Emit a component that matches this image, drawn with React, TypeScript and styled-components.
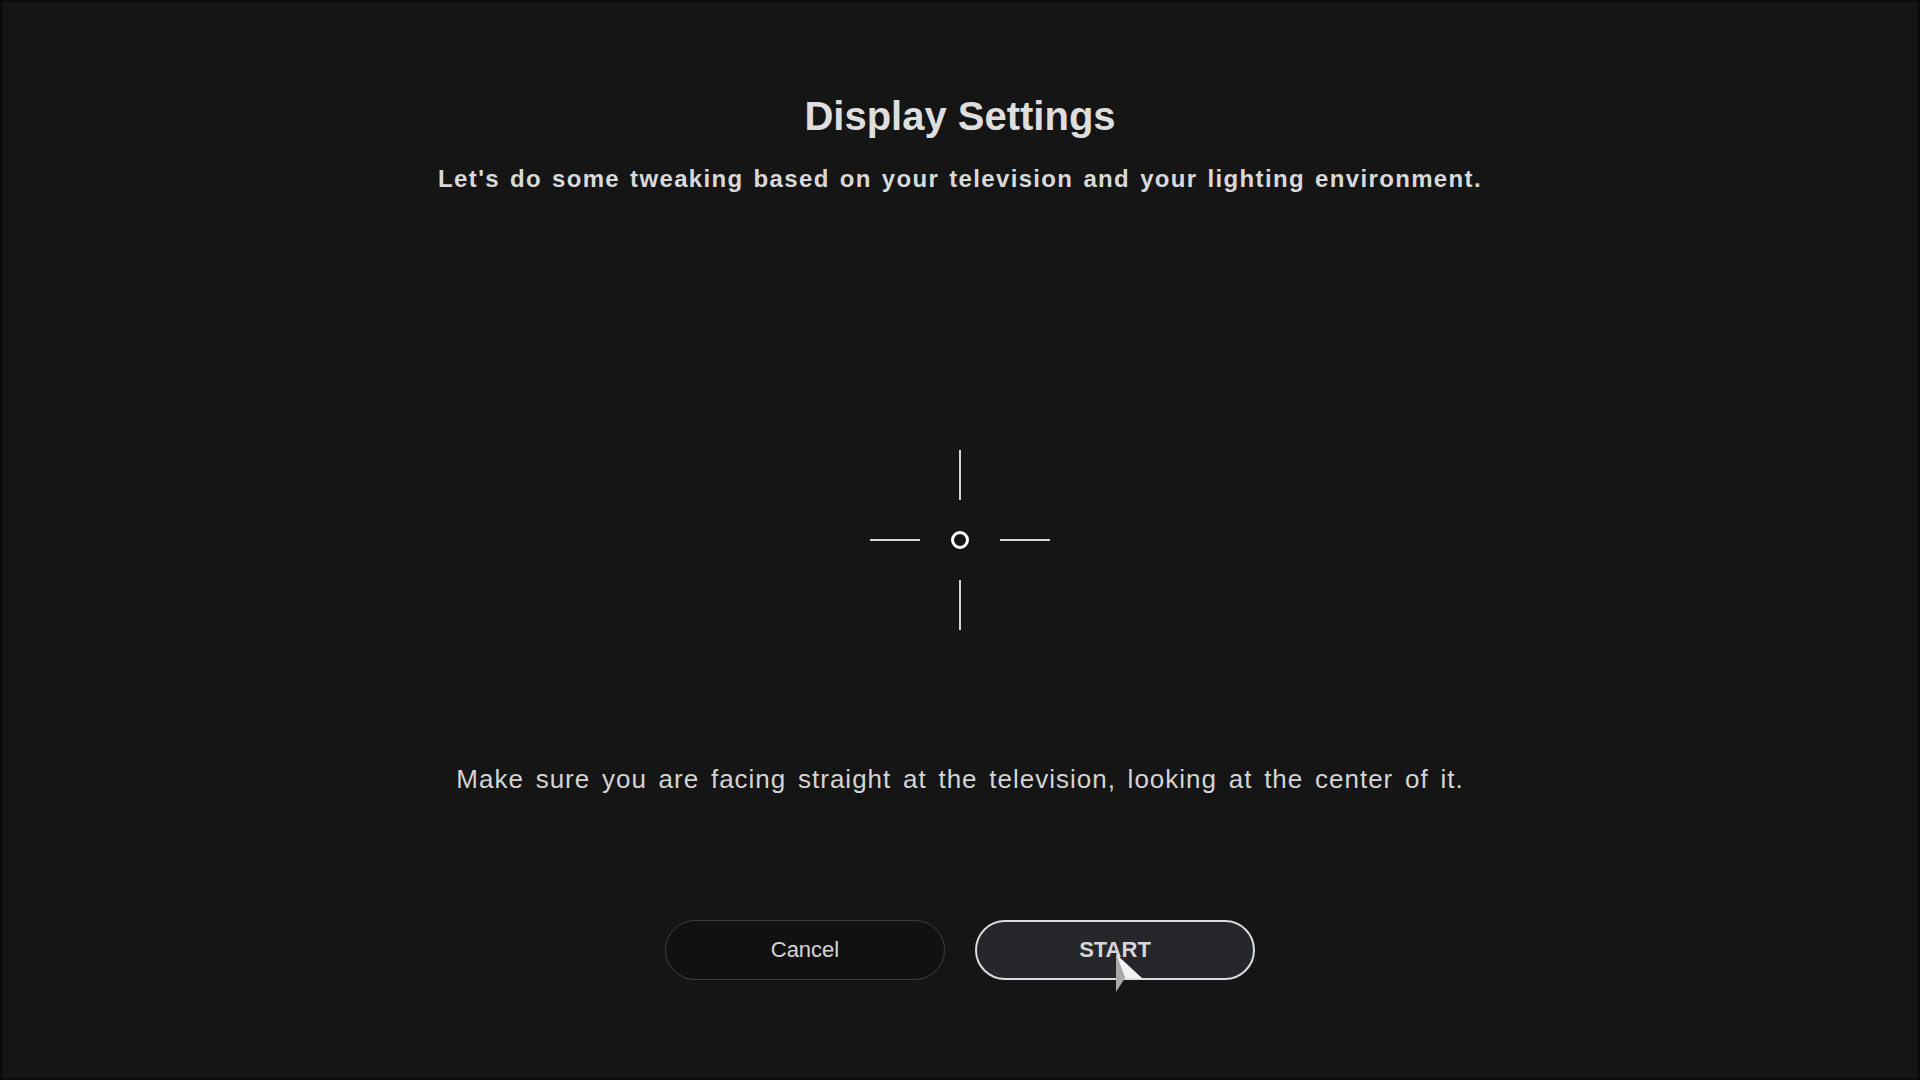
import React from 'react'
import styled, { createGlobalStyle } from 'styled-components'

const GlobalStyle = createGlobalStyle`
  html, body {
    margin: 0;
    padding: 0;
    background: #151515;
  }
  * {
    box-sizing: border-box;
  }
`

const Screen = styled.div`
  width: 100%;
  height: 100vh;
  background: #151515;
  box-shadow: inset 0 0 0 2px #0b0b0b;
  display: flex;
  flex-direction: column;
  align-items: center;
  font-family: 'Liberation Sans', Arial, sans-serif;
  color: #dcdcdc;
  overflow: hidden;
`

const Title = styled.h1`
  margin: 92px 0 0;
  font-size: 40px;
  line-height: 48px;
  font-weight: 700;
  color: #dedede;
`

const Subtitle = styled.p`
  margin: 23px 0 0;
  font-size: 24px;
  line-height: 32px;
  font-weight: 700;
  letter-spacing: 1.35px;
  word-spacing: 2px;
  color: #d9d9d9;
`

const Target = styled.svg`
  margin-top: 255px;
  width: 180px;
  height: 180px;
  display: block;
`

const Hint = styled.p`
  margin: 133px 0 0;
  font-size: 26px;
  line-height: 32px;
  letter-spacing: 1px;
  word-spacing: 3.5px;
  color: #d4d4d4;
`

const ButtonRow = styled.div`
  margin-top: 125px;
  display: flex;
  gap: 30px;
`

const Button = styled.button<{ $primary?: boolean }>`
  position: relative;
  width: 280px;
  height: 60px;
  border-radius: 30px;
  font-family: inherit;
  font-size: 22px;
  font-weight: ${(p) => (p.$primary ? 700 : 400)};
  color: #d6d6d6;
  background: ${(p) => (p.$primary ? '#26272a' : '#111111')};
  border: ${(p) => (p.$primary ? '2px solid #dcdcdc' : '1px solid #3f3f3f')};
  cursor: default;
`

const Pointer = styled.svg`
  position: absolute;
  left: 138px;
  top: 31px;
  width: 30px;
  height: 40px;
  pointer-events: none;
`

const Crosshair = () => (
  <Target viewBox="0 0 180 180">
    <g stroke="#d6d6d6" strokeWidth="2">
      <line x1="90" y1="0" x2="90" y2="50" />
      <line x1="90" y1="130" x2="90" y2="180" />
      <line x1="0" y1="90" x2="50" y2="90" />
      <line x1="130" y1="90" x2="180" y2="90" />
    </g>
    <circle cx="90" cy="90" r="7.5" fill="none" stroke="#ffffff" strokeWidth="3" />
  </Target>
)

const Arrow = () => (
  <Pointer viewBox="0 0 30 40">
    <polygon points="1,1 1,39 10,25" fill="#a9a9a9" />
    <polygon points="1,1 10,25 28,26" fill="#f2f2f2" />
  </Pointer>
)

const App = () => {
  return (
    <Screen>
      <GlobalStyle />
      <Title>Display Settings</Title>
      <Subtitle>
        Let's do some tweaking based on your television and your lighting environment.
      </Subtitle>
      <Crosshair />
      <Hint>Make sure you are facing straight at the television, looking at the center of it.</Hint>
      <ButtonRow>
        <Button>Cancel</Button>
        <Button $primary>
          START
          <Arrow />
        </Button>
      </ButtonRow>
    </Screen>
  )
}

export default App
